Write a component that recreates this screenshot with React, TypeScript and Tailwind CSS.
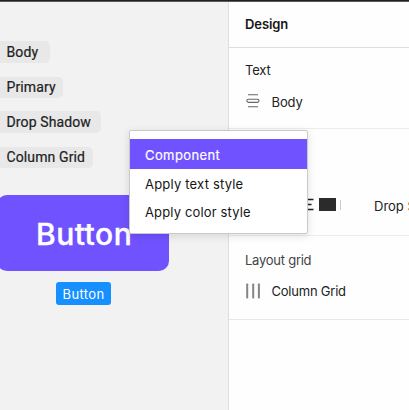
const tags = [
  { name: 'Body', box: 'mt-[39px] h-[22px] w-[50px]', text: 'leading-[20px]' },
  { name: 'Primary', box: 'mt-[14px] h-[21px] w-[63px]', text: 'leading-[20px] pb-px' },
  { name: 'Drop Shadow', box: 'mt-[13px] h-[22px] w-[101px]', text: 'leading-[20px]' },
  { name: 'Column Grid', box: 'mt-[14px] h-[21px] w-[93px]', text: 'leading-[20px] pb-px' },
];

function TextStyleIcon() {
  return (
    <svg className="-mt-px shrink-0" width="14" height="14" viewBox="0 0 14 14" fill="none" stroke="#666" strokeWidth="1.1">
      <path d="M2 .8H12M2 12.8H12" />
      <rect x=".8" y="5.2" width="12.2" height="3.2" rx="1.6" />
    </svg>
  );
}

function ColumnsIcon() {
  return (
    <svg className="-mt-px shrink-0" width="16" height="16" viewBox="0 0 16 16" fill="#858585">
      <rect x="1.2" y=".5" width="2" height="15" rx=".7" />
      <rect x="7.2" y=".5" width="2" height="15" rx=".7" />
      <rect x="12.9" y=".5" width="2" height="15" rx=".7" />
    </svg>
  );
}

function Canvas() {
  return (
    <main className="w-[228px] shrink-0 bg-[#f2f2f2]">
      {tags.map((tag) => (
        <div key={tag.name} className={`flex items-center rounded-r-[5px] bg-[#e8e8e8] pl-[6.5px] ${tag.box}`}>
          <span className={`font-['Roboto',sans-serif] text-[14px] font-normal tracking-[0.12px] whitespace-nowrap text-[#222] [-webkit-text-stroke:0.2px_#222] ${tag.text}`}>
            {tag.name}
          </span>
        </div>
      ))}
      <div className="mt-[27px] -ml-[3px] flex h-[76px] w-[171.5px] items-center rounded-[10px] bg-[#7152ff] pt-[2px] pl-[39px]">
        <span className="text-[30px] leading-9 font-medium tracking-[0.5px] text-white [-webkit-text-stroke:0.4px_white]">Button</span>
      </div>
      <div className="mt-[11px] ml-[56px] flex h-[23px] w-[55px] items-center justify-center rounded-[3px] bg-[#1690ff]">
        <span className="text-[13px] leading-5 tracking-[0.35px] text-white">Button</span>
      </div>
    </main>
  );
}

function DesignPanel() {
  return (
    <aside className="w-[181px] shrink-0 overflow-hidden border-l border-[#dedede] bg-[#fefefe] text-[13px] leading-5 text-[#222]">
      <h2 className="flex h-[46px] items-center border-b border-[#dedede] pb-px pl-4 text-[13px] font-semibold tracking-[-0.1px] text-[#151515]">Design</h2>
      <section className="h-[81px] border-b border-[#ececec] pt-[12px] pl-4">
        <h3 className="tracking-[-0.2px]">Text</h3>
        <div className="mt-[11px] flex items-center pl-[1px]">
          <TextStyleIcon />
          <span className="ml-[11.5px] pt-px tracking-[-0.1px]">Body</span>
        </div>
      </section>
      <section className="h-[107px] border-b border-[#ececec] pt-[67px]">
        <div className="flex items-center whitespace-nowrap">
          <svg className="mb-[3px] ml-[76px] shrink-0" width="9" height="13" viewBox="0 0 9 13" stroke="#222" strokeWidth="1.3">
            <path d="M0 1.5H8.5M0 6.5H6.5M0 11.5H8.5" />
          </svg>
          <span className="mb-[3px] ml-[5px] h-[13px] w-[17px] shrink-0 bg-[#2b2b2b]" />
          <span className="mb-[3px] ml-1 h-[10px] w-px shrink-0 bg-[#ccc]" />
          <span className="ml-[33px]">Drop Shadow</span>
        </div>
      </section>
      <section className="h-[84px] border-b border-[#e8e8e8] pt-[14px] pl-4">
        <h3 className="tracking-[-0.25px] text-[#444]">Layout grid</h3>
        <div className="mt-[11px] flex items-center">
          <ColumnsIcon />
          <span className="ml-[10.5px] tracking-[-0.22px]">Column Grid</span>
        </div>
      </section>
    </aside>
  );
}

function ContextMenu() {
  return (
    <div className="absolute top-[130px] left-[129px] h-[104px] w-[179px] rounded-[2px] border border-[#c9c9c9] bg-white pt-2 text-[13px] text-[#161616] shadow-[0_2px_8px_rgba(0,0,0,0.12)]">
      <div className="flex h-[30px] items-center bg-[#7152ff] pt-[3px] pl-[15px] tracking-[0.4px] text-white [-webkit-text-stroke:0.2px_white]">Component</div>
      <div className="flex h-[29px] items-center pt-[2px] pl-[15px] tracking-[0.2px]">Apply text style</div>
      <div className="flex h-[28px] items-center pt-[2px] pl-[15px] tracking-[0.15px]">Apply color style</div>
    </div>
  );
}

export default function App() {
  return (
    <div className="relative flex h-[410px] w-[409px] flex-col overflow-hidden bg-[#f2f2f2] font-['Inter',sans-serif]">
      <div className="h-[2px] shrink-0 border-b border-[#5c595c] bg-[#211f21]" />
      <div className="flex flex-1">
        <Canvas />
        <DesignPanel />
      </div>
      <ContextMenu />
    </div>
  );
}
